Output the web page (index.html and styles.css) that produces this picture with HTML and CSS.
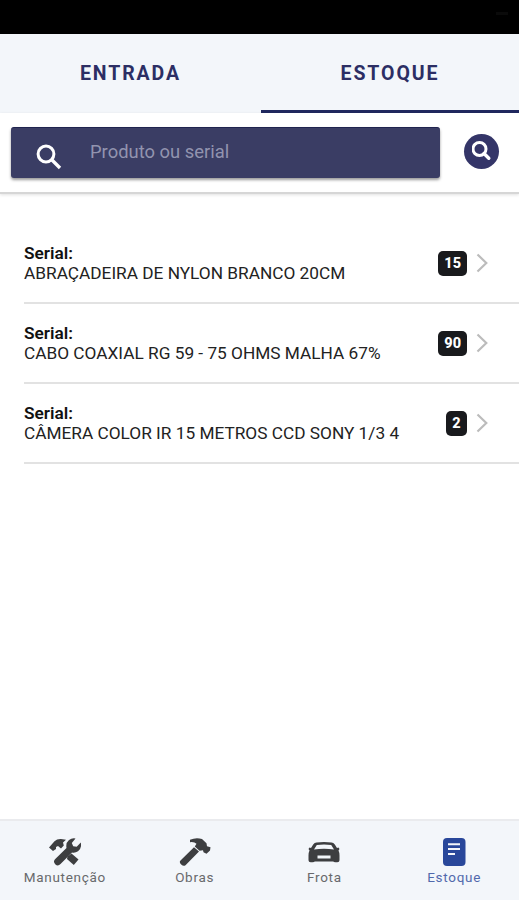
FILE: index.html
```html
<!DOCTYPE html>
<html lang="pt-BR">
<head>
  <meta charset="UTF-8">
  <meta name="viewport" content="width=device-width, initial-scale=1.0">
  <title>Estoque</title>
  <link rel="stylesheet" href="styles.css">
</head>
<body>
  <div class="status-bar"><span class="status-mark"></span></div>

  <div class="segment">
    <button class="segment-button">ENTRADA</button>
    <button class="segment-button active">ESTOQUE</button>
  </div>

  <div class="toolbar">
    <label class="search-bar">
      <svg class="search-icon" viewBox="0 0 26 26">
        <circle cx="10" cy="10" r="7.900" fill="none" stroke="currentColor" stroke-width="3"/>
        <path d="M15.500 15.500L24 24" stroke="currentColor" stroke-width="3.400"/>
      </svg>
      <input type="text" class="search-input" placeholder="Produto ou serial">
    </label>
    <button class="search-button">
      <svg viewBox="0 0 20 20">
        <circle cx="7.500" cy="8" r="6.500" fill="none" stroke="currentColor" stroke-width="3"/>
        <path d="M12 12.500L16.800 17.300" stroke="currentColor" stroke-width="3.400" stroke-linecap="round"/>
      </svg>
    </button>
  </div>

  <div class="list">
    <div class="item">
      <div class="item-label">
        <b>Serial:</b>
        <p>ABRAÇADEIRA DE NYLON BRANCO 20CM</p>
      </div>
      <span class="badge">15</span>
      <svg class="chevron" viewBox="0 0 12 20"><path d="M1.500 1.500L10.300 10L1.500 18.500"/></svg>
    </div>
    <div class="item">
      <div class="item-label">
        <b>Serial:</b>
        <p>CABO COAXIAL RG 59 - 75 OHMS MALHA 67%</p>
      </div>
      <span class="badge">90</span>
      <svg class="chevron" viewBox="0 0 12 20"><path d="M1.500 1.500L10.300 10L1.500 18.500"/></svg>
    </div>
    <div class="item">
      <div class="item-label">
        <b>Serial:</b>
        <p>CÂMERA COLOR IR 15 METROS CCD SONY 1/3 4</p>
      </div>
      <span class="badge">2</span>
      <svg class="chevron" viewBox="0 0 12 20"><path d="M1.500 1.500L10.300 10L1.500 18.500"/></svg>
    </div>
  </div>

  <div class="tab-bar">
    <button class="tab-button">
      <svg class="tab-icon" viewBox="0 0 32 28">
        <path d="M0 9.500L5.500 3.200Q8 .8 12 1L17 1.700L14 4.500L14.800 7.500L12 10.500L9 8L7 9L7 11L4 13Z"/>
        <path d="M18.500 18.500L22.500 15.500L29.500 21.500L24.800 27L18 21Z"/>
        <path d="M26.500 .5L22.800 5L24.200 8.200L27.700 8.700L31.800 4.500Q33 10.500 29 13.300Q26 15.300 23 14.500L11.500 26Q9 28.700 6.200 26.200Q3.800 23.600 6 21.200L17.500 10Q16.500 5 20 2.100Q23 -.3 26.500 .5Z"/>
      </svg>
      <span>Manutenção</span>
    </button>
    <button class="tab-button">
      <svg class="tab-icon" viewBox="0 0 32 28">
        <path d="M11 1.800Q17 -1 23 1L27.500 5.200L28 8.200L31.500 9.200L31 12.500L27.500 15.800L24.500 14.300L24 12.300L20.500 12.800L15.800 8.500L17.500 5.800Q15.500 3.700 11 4.200Z"/>
        <path d="M15 9.200L20 13.600L6.500 27.200Q4.500 28.800 2.200 26.500Q-.2 24.200 1.500 22.500Z"/>
      </svg>
      <span>Obras</span>
    </button>
    <button class="tab-button">
      <svg class="tab-icon" viewBox="0 0 32 28">
        <path fill-rule="evenodd" d="M8.500 4.500Q16 3.500 23.500 4.500Q25.500 4.700 26.800 6.500L29 10L30.500 9.500L31.500 11L30.500 12.500Q31.500 14.500 31.500 17.500V22.300Q31.500 24.300 29.300 24.300H27.500Q25.500 24.300 25.300 23.500H6.700Q6.500 24.300 4.500 24.300H2.700Q.5 24.300 .5 22.300V17.500Q.5 14.500 1.500 12.500L.5 11L1.500 9.500L3 10L5.200 6.500Q6.500 4.700 8.500 4.500ZM8.800 7L6 11.500Q16 10 26 11.500L23.200 7Q16 6 8.800 7ZM9.500 17.500V20.500H22.500V17.500Z"/>
      </svg>
      <span>Frota</span>
    </button>
    <button class="tab-button selected">
      <svg class="tab-icon" viewBox="0 0 32 28">
        <rect x="5" y="0" width="22.500" height="28" rx="4"/>
        <path d="M10 6.200H22M10 11.100H22M10 16H17" fill="none" stroke="#f4f6fa" stroke-width="2"/>
      </svg>
      <span>Estoque</span>
    </button>
  </div>
</body>
</html>
```
FILE: styles.css
```css
* {
  margin: 0;
  padding: 0;
  box-sizing: border-box;
}

body {
  height: 100vh;
  display: flex;
  flex-direction: column;
  font-family: Roboto, "Liberation Sans", sans-serif;
  background: #fff;
  color: #222;
  overflow: hidden;
}

button {
  border: none;
  background: none;
  font-family: inherit;
  cursor: pointer;
}

.status-bar {
  flex: none;
  display: flex;
  justify-content: flex-end;
  height: 34px;
  padding: 12px 11px;
  background: #000;
}

.status-mark {
  width: 12px;
  height: 3px;
  background: #0a0a0a;
}

.segment {
  flex: none;
  display: grid;
  grid-template-columns: 261px 1fr;
  height: 79px;
  background: #f3f6fa;
}

.segment-button {
  padding-top: 3px;
  border-bottom: 3px solid transparent;
  color: #2c2e64;
  font-size: 19.5px;
  font-weight: 700;
  letter-spacing: 1.9px;
}

.segment-button.active {
  border-bottom-color: #20285f;
}

.toolbar {
  flex: none;
  display: flex;
  align-items: center;
  gap: 24px;
  height: 81px;
  padding: 0 20px 1px 11px;
  border-bottom: 2px solid #d6d6d6;
  box-shadow: 0 1px 3px rgba(0, 0, 0, 0.12);
}

.search-bar {
  flex: 1;
  display: flex;
  align-items: center;
  height: 51px;
  padding-left: 25px;
  border-top: 1px solid #20244f;
  border-radius: 3px;
  background: #3a3d64;
  box-shadow: 0 2px 3px rgba(0, 0, 0, 0.4);
}

.search-icon {
  width: 26px;
  height: 26px;
  margin-top: 8px;
  color: #fff;
}

.search-input {
  flex: 1;
  min-width: 0;
  margin: 0 0 2px 28px;
  border: none;
  outline: none;
  background: none;
  color: #fff;
  font-family: inherit;
  font-size: 18.4px;
}

.search-input::placeholder {
  color: #9294af;
}

.search-button {
  display: flex;
  align-items: center;
  justify-content: center;
  width: 35px;
  height: 35px;
  margin-bottom: 2px;
  border-radius: 50%;
  background: #343568;
  color: #fff;
}

.search-button svg {
  width: 20px;
  height: 20px;
}

.list {
  flex: 1;
  padding: 30px 0 0 24px;
}

.item {
  display: flex;
  align-items: center;
  height: 80px;
  padding-right: 31px;
  border-bottom: 2px solid #e2e2e2;
}

.item-label {
  flex: 1;
  font-size: 17.25px;
  line-height: 20px;
  white-space: nowrap;
}

.item-label b {
  display: block;
  color: #111;
  font-weight: 600;
}

.badge {
  min-width: 21px;
  height: 25px;
  margin-right: 9px;
  padding: 0 6px;
  border-radius: 5px;
  background: #191a1d;
  color: #fff;
  font-size: 14.5px;
  font-weight: 800;
  line-height: 25px;
  text-align: center;
}

.chevron {
  width: 12px;
  height: 20px;
  fill: none;
  stroke: #bcbcbc;
  stroke-width: 2.2;
}

.tab-bar {
  flex: none;
  display: grid;
  grid-template-columns: repeat(4, 1fr);
  height: 81px;
  border-top: 2px solid #eaebee;
  background: #f3f6fa;
}

.tab-button {
  display: flex;
  flex-direction: column;
  align-items: center;
  padding-top: 17px;
  color: #68696c;
  font-size: 13.5px;
  line-height: 16px;
  letter-spacing: 0.7px;
}

.tab-icon {
  width: 32px;
  height: 28px;
  margin-bottom: 3px;
  fill: #3d3e40;
}

.tab-button.selected {
  color: #5169ac;
}

.tab-button.selected .tab-icon {
  fill: #29479a;
}
```
